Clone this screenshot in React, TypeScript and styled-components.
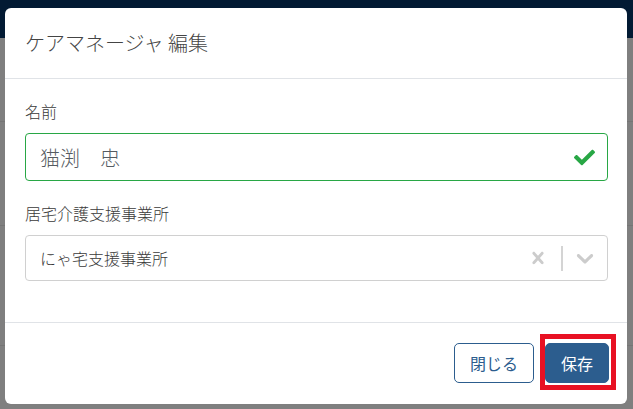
import styled, { createGlobalStyle } from "styled-components";
import { FaCheck } from "react-icons/fa";

const GlobalStyle = createGlobalStyle`
  html, body {
    margin: 0;
    padding: 0;
    width: 100%;
    height: 100%;
    overflow: hidden;
  }
  body {
    font-family: "Noto Sans CJK JP", "Noto Sans", "Liberation Sans", sans-serif;
  }
  * { box-sizing: border-box; }
`;

const Page = styled.div`
  position: relative;
  width: 100vw;
  height: 100vh;
  background: #7f7f7f;
  display: flex;
  flex-direction: column;
`;

const TopBar = styled.div`
  height: 38px;
  background: #021a33;
`;

const BackRow = styled.div<{ $h: number }>`
  height: ${(p) => p.$h}px;
  border-bottom: 1px solid #757575;
`;

const Modal = styled.div`
  position: absolute;
  left: 5px;
  top: 8px;
  width: 622px;
  height: 396px;
  background: #fff;
  border-radius: 6px;
  display: flex;
  flex-direction: column;
  overflow: hidden;
`;

const Header = styled.div`
  height: 71px;
  padding: 0 20px;
  display: flex;
  align-items: center;
  border-bottom: 1px solid #e0e3e7;
`;

const Title = styled.h5`
  margin: 0;
  font-size: 20px;
  font-weight: 300;
  color: #444;
  line-height: 24px;
`;

const Body = styled.div`
  padding: 20px 19px 0 20px;
`;

const FormGroup = styled.div`
  margin-bottom: 20px;
`;

const Label = styled.div`
  font-size: 16px;
  font-weight: 300;
  line-height: 24px;
  color: #3a3a3a;
  margin-bottom: 10px;
`;

const ValidInput = styled.div`
  height: 48px;
  border: 1px solid #28a745;
  border-radius: 4px;
  display: flex;
  align-items: center;
  justify-content: space-between;
  padding: 0 12px 0 14px;
  font-size: 20px;
  font-weight: 300;
  color: #555b61;
  svg {
    color: #28a745;
  }
`;

const SelectBox = styled.div`
  height: 46px;
  border: 1px solid #d0d0d0;
  border-radius: 4px;
  display: flex;
  align-items: center;
`;

const SelectValue = styled.div`
  flex: 1;
  padding-left: 14px;
  font-size: 16px;
  font-weight: 300;
  color: #3a3a3a;
`;

const Indicator = styled.div<{ $w: number }>`
  width: ${(p) => p.$w}px;
  display: flex;
  align-items: center;
  justify-content: center;
  color: #cccccc;
`;

const Separator = styled.span`
  width: 2px;
  height: 25px;
  background: #d4d4d4;
`;

const Footer = styled.div`
  margin-top: auto;
  border-top: 1px solid #e0e3e7;
  padding: 20px 18px 21px;
  display: flex;
  justify-content: flex-end;
  gap: 11px;
`;

const Button = styled.button<{ $primary?: boolean }>`
  height: 40px;
  padding: 0 15px;
  border-radius: 5px;
  font-family: inherit;
  font-size: 16px;
  border: 1px solid #2c5d8e;
  background: ${(p) => (p.$primary ? "#2c5d8e" : "#fff")};
  color: ${(p) => (p.$primary ? "#fff" : "#2c5d8e")};
`;

const Highlight = styled.div`
  position: relative;
  &::after {
    content: "";
    position: absolute;
    top: -9px;
    right: -7px;
    bottom: -7px;
    left: -5px;
    border: 5px solid #e81123;
    pointer-events: none;
  }
`;

const CrossIcon = () => (
  <svg width="24" height="24" viewBox="0 0 20 20" fill="currentColor">
    <path d="M14.348 14.849c-0.469 0.469-1.229 0.469-1.697 0l-2.651-3.030-2.651 3.029c-0.469 0.469-1.229 0.469-1.697 0-0.469-0.469-0.469-1.229 0-1.697l2.758-3.15-2.759-3.152c-0.469-0.469-0.469-1.228 0-1.697s1.228-0.469 1.697 0l2.652 3.031 2.651-3.031c0.469-0.469 1.228-0.469 1.697 0s0.469 1.229 0 1.697l-2.758 3.152 2.758 3.15c0.469 0.469 0.469 1.229 0 1.698z" />
  </svg>
);

const ChevronIcon = () => (
  <svg width="28" height="28" viewBox="0 0 20 20" fill="currentColor">
    <path d="M4.516 7.548c0.436-0.446 1.043-0.481 1.576 0l3.908 3.747 3.908-3.747c0.533-0.481 1.141-0.446 1.574 0 0.436 0.445 0.408 1.197 0 1.615-0.406 0.418-4.695 4.502-4.695 4.502-0.217 0.223-0.502 0.335-0.787 0.335s-0.57-0.112-0.789-0.335c0 0-4.287-4.084-4.695-4.502s-0.436-1.170 0-1.615z" />
  </svg>
);

export default function App() {
  return (
    <Page>
      <GlobalStyle />
      <TopBar />
      <BackRow $h={84} />
      <BackRow $h={104} />
      <BackRow $h={120} />

      <Modal>
        <Header>
          <Title>ケアマネージャ 編集</Title>
        </Header>
        <Body>
          <FormGroup>
            <Label>名前</Label>
            <ValidInput>
              <span>猫渕　忠</span>
              <FaCheck size={21} />
            </ValidInput>
          </FormGroup>
          <FormGroup>
            <Label>居宅介護支援事業所</Label>
            <SelectBox>
              <SelectValue>にゃ宅支援事業所</SelectValue>
              <Indicator $w={46}>
                <CrossIcon />
              </Indicator>
              <Separator />
              <Indicator $w={44}>
                <ChevronIcon />
              </Indicator>
            </SelectBox>
          </FormGroup>
        </Body>
        <Footer>
          <Button>閉じる</Button>
          <Highlight>
            <Button $primary>保存</Button>
          </Highlight>
        </Footer>
      </Modal>
    </Page>
  );
}
